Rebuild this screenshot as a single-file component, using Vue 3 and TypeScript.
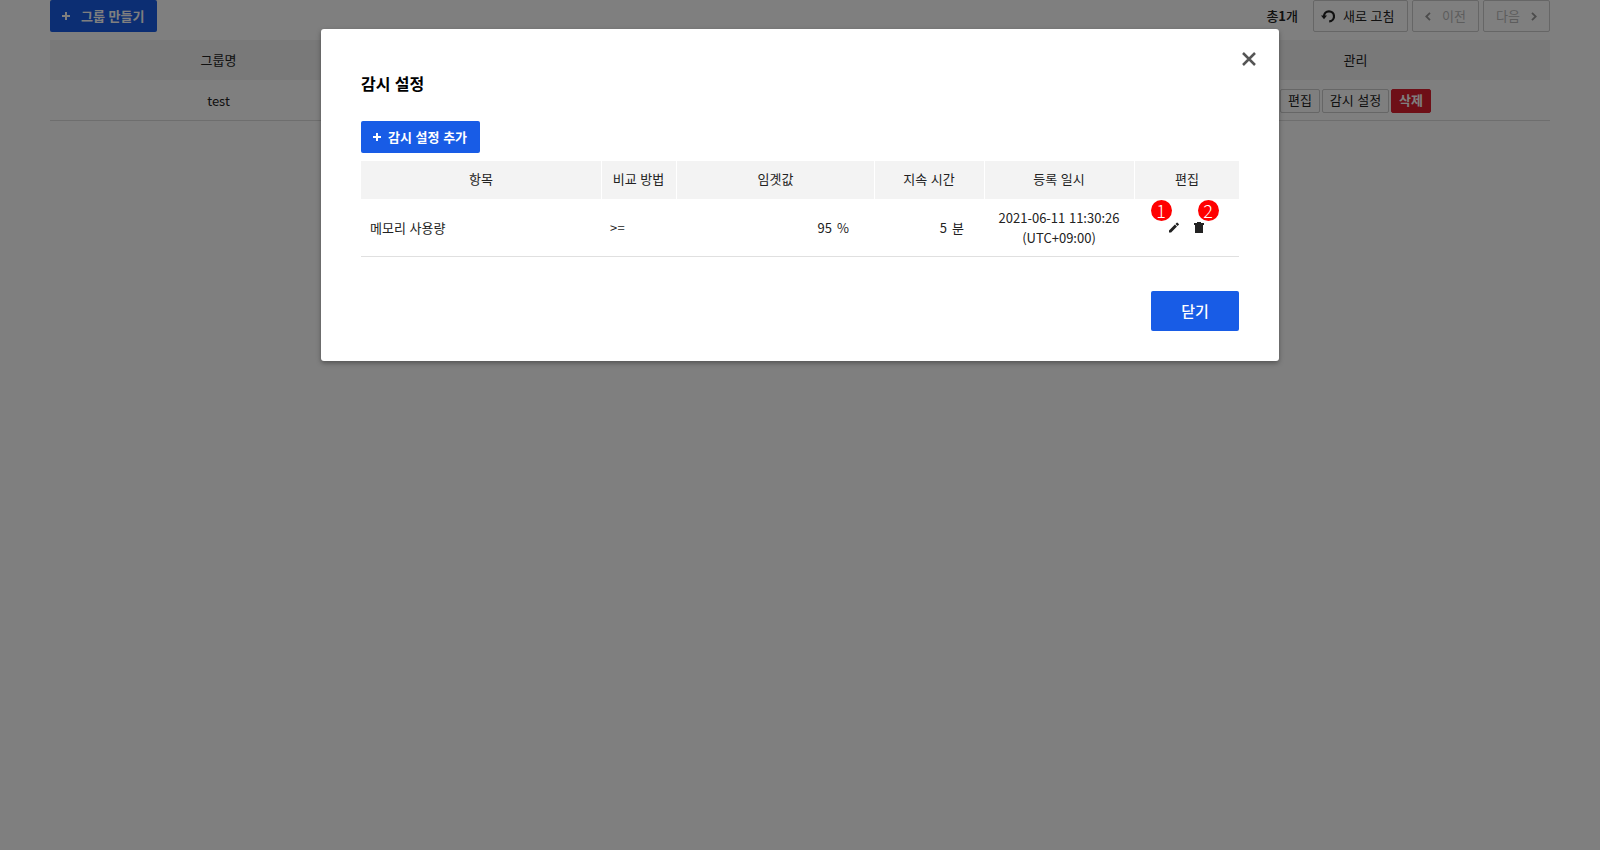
<script setup lang="ts">
interface MonitorRow {
  item: string
  method: string
  threshold: string
  duration: string
  date: string
  zone: string
}

const rows: MonitorRow[] = [
  { item: '메모리 사용량', method: '>=', threshold: '95', duration: '5', date: '2021-06-11 11:30:26', zone: '(UTC+09:00)' },
]
const heads: string[] = ['항목', '비교 방법', '임곗값', '지속 시간', '등록 일시', '편집']
</script>

<template>
  <div class="page">
    <main class="content">
      <div class="toolbar">
        <button class="btn primary create">
          <svg class="plus" viewBox="0 0 8 8"><path d="M4 0v8M0 4h8" /></svg>
          <span>그룹 만들기</span>
        </button>
        <div class="tools">
          <span class="total">총<b>1</b>개</span>
          <button class="btn outline refresh">
            <svg viewBox="0 0 14 14"><path d="M3 7.4A5 5 0 1 1 8.2 12.3" /><path class="solid" d="M0 6.5h6L3 10.3z" /></svg>
            <span>새로 고침</span>
          </button>
          <button class="btn outline nav" disabled>
            <svg viewBox="0 0 6 9"><path d="M5 .8 1.3 4.5 5 8.2" /></svg>
            <span>이전</span>
          </button>
          <button class="btn outline nav" disabled>
            <span>다음</span>
            <svg viewBox="0 0 6 9"><path d="M1 .8 4.7 4.5 1 8.2" /></svg>
          </button>
        </div>
      </div>
      <div class="group-row group-head"><span>그룹명</span><span></span><span>관리</span></div>
      <div class="group-row group-item">
        <span class="name">test</span><span></span>
        <div class="actions">
          <button class="small">편집</button>
          <button class="small">감시 설정</button>
          <button class="small danger">삭제</button>
        </div>
      </div>
    </main>

    <div class="overlay">
      <section class="modal" role="dialog">
        <button class="close" aria-label="닫기">
          <svg viewBox="0 0 14 14"><path d="M1 1l12 12M13 1 1 13" /></svg>
        </button>
        <h2>감시 설정</h2>
        <button class="btn primary add">
          <svg class="plus" viewBox="0 0 8 8"><path d="M4 0v8M0 4h8" /></svg>
          <span>감시 설정 추가</span>
        </button>
        <div class="grid head"><span v-for="h in heads" :key="h">{{ h }}</span></div>
        <div v-for="r in rows" :key="r.item" class="grid row">
          <span class="left">{{ r.item }}</span>
          <span class="left method">{{ r.method }}</span>
          <span class="right threshold"><i>{{ r.threshold }}</i>%</span>
          <span class="right duration"><i>{{ r.duration }}</i>분</span>
          <span class="stamp">{{ r.date }}<br />{{ r.zone }}</span>
          <div class="edit">
            <div class="tool">
              <svg viewBox="0 0 10 10"><path d="M0 7.9 5.9 2 8 4.1 2.1 10H0zM6.5 1.4 7.7.2a.6.6 0 0 1 .8 0L9.8 1.5a.6.6 0 0 1 0 .8L8.6 3.5z" /></svg>
              <em class="badge one">1</em>
            </div>
            <div class="tool">
              <svg class="trash" viewBox="0 0 10 11"><path d="M0 1h3V0h4v1h3v2H0zM1 3h8v8H1z" /></svg>
              <em class="badge two">2</em>
            </div>
          </div>
        </div>
        <footer><button class="btn primary done">닫기</button></footer>
      </section>
    </div>
  </div>
</template>

<style>
body {
  background: #fff;
  overflow: hidden;
}
</style>

<style scoped>
.page {
  position: relative;
  height: 850px;
  font: 13px/20px "Noto Sans CJK KR", sans-serif;
  word-spacing: 0.7px;
  color: #222;
}
.page * { box-sizing: border-box; }
button { font: inherit; color: inherit; word-spacing: inherit; padding: 0; margin: 0; }
svg { flex: none; fill: none; stroke: currentColor; }
.content { width: 1500px; margin: 0 auto; }
.toolbar { display: flex; justify-content: space-between; height: 32px; margin-bottom: 8px; }
.btn { display: flex; align-items: center; height: 32px; border: 0; border-radius: 2px; }
.btn span { padding-bottom: 1px; }
.primary { background: #185ce6; color: #fff; font-weight: 700; }
.plus { width: 8px; height: 8px; stroke-width: 2; }
.create { width: 107px; padding-left: 12px; gap: 11px; white-space: nowrap; }
.tools { display: flex; align-items: center; gap: 4px; }
.total { margin-right: 11px; font-weight: 500; }
.outline { border: 1px solid #ccc; background: #fff; }
.refresh { width: 95px; padding-left: 7px; gap: 8px; white-space: nowrap; }
.refresh svg { width: 14px; height: 14px; stroke-width: 2.2; }
.refresh .solid { fill: currentColor; stroke: none; }
.nav { width: 67px; justify-content: center; gap: 11px; color: #bbb; }
.nav svg { width: 6px; height: 9px; stroke: #999; stroke-width: 1.8; }
.group-row { display: grid; grid-template-columns: 337px 1fr 389px; height: 40px; align-items: center; text-align: center; }
.group-head { background: #f3f3f3; }
.group-head span { padding-bottom: 1px; }
.group-item { height: 41px; border-bottom: 1px solid #ddd; }
.name { padding-top: 2px; }
.actions { display: flex; justify-content: center; gap: 2px; padding-top: 2px; }
.small { height: 24px; width: 40px; border: 1px solid #ccc; border-radius: 2px; background: #fff; line-height: 20px; padding-bottom: 2px; white-space: nowrap; }
.small:nth-child(2) { width: 67px; }
.danger { background: #dc1e2f; border-color: #dc1e2f; color: #fff; font-weight: 700; }
.overlay { position: absolute; inset: 0; background: rgba(0, 0, 0, 0.5); padding-top: 29px; }
.modal { position: relative; width: 958px; height: 332px; margin: 0 auto; padding: 42px 40px 0; background: #fff; border-radius: 3px; box-shadow: 0 2px 5px rgba(0, 0, 0, 0.35); }
.close { position: absolute; top: 23px; right: 23px; width: 14px; height: 14px; border: 0; background: none; color: #555; }
.close svg { display: block; width: 14px; height: 14px; stroke-width: 2.5; }
h2 { margin: 0 0 26px; font-size: 16px; line-height: 24px; font-weight: 700; color: #000; word-spacing: 0.7px; }
.add { width: 119px; padding-left: 12px; gap: 7px; margin-bottom: 8px; white-space: nowrap; }
.grid { display: grid; grid-template-columns: 241px 75px 198px 110px 150px 104px; align-items: center; text-align: center; }
.head { height: 38px; background: #f3f3f3; }
.head span { height: 38px; line-height: 36px; border-right: 1px solid #fff; }
.head span:nth-child(2), .head span:nth-child(4), .head span:nth-child(5) { padding-right: 1px; }
.head span:last-child { border: 0; }
.row { height: 58px; border-bottom: 1px solid #e0e0e0; }
.row .left { text-align: left; padding-left: 9px; }
.row .method { padding-left: 8px; letter-spacing: 0.3px; }
.row .right { text-align: right; }
.row .threshold { padding-right: 26px; }
.row .duration { padding-right: 21px; }
.stamp { padding-right: 2px; }
i { font-style: normal; margin-right: 5px; }
.edit { display: flex; justify-content: center; gap: 15px; padding-right: 2px; }
.tool { position: relative; display: flex; }
.tool svg { width: 10px; height: 11px; fill: #222; stroke: none; }
.badge { position: absolute; width: 21px; height: 21px; border-radius: 50%; background: #f00; color: #fff; font: 300 18px/20px "Noto Sans CJK KR", sans-serif; text-align: center; }
.one { left: -18px; top: -22px; }
.two { left: 4px; top: -22px; }
footer { display: flex; justify-content: flex-end; margin-top: 34px; }
.done { width: 88px; height: 40px; justify-content: center; font-size: 15px; font-weight: 500; }
</style>
